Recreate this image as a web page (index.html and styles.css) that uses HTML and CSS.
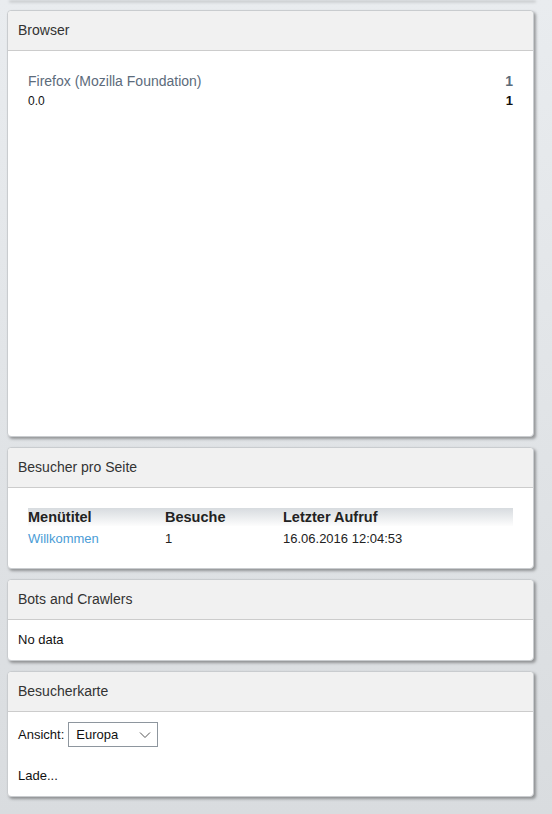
FILE: index.html
```html
<!DOCTYPE html>
<html lang="de">
<head>
    <meta charset="UTF-8">
    <meta name="viewport" content="width=device-width, initial-scale=1.0">
    <link rel="stylesheet" href="styles.css">
    <title>Statistik</title>
</head>
<body>

    <div class="page">
        <!-- angeschnittene Box von oben -->
        <div class="box box-cut"></div>

        <!-- Browser -->
        <div class="box">
            <div class="box-head">Browser</div>
            <div class="box-body box-browser">
                <ul class="browser-list">
                    <li class="browser-main">
                        <span>Firefox (Mozilla Foundation)</span>
                        <b>1</b>
                    </li>
                    <li class="browser-version">
                        <span>0.0</span>
                        <b>1</b>
                    </li>
                </ul>
            </div>
        </div>

        <!-- Besucher pro Seite -->
        <div class="box">
            <div class="box-head">Besucher pro Seite</div>
            <div class="box-body">
                <table class="visits">
                    <thead>
                        <tr>
                            <th class="col-title">Menütitel</th>
                            <th class="col-count">Besuche</th>
                            <th>Letzter Aufruf</th>
                        </tr>
                    </thead>
                    <tbody>
                        <tr>
                            <td><a href="#">Willkommen</a></td>
                            <td>1</td>
                            <td>16.06.2016 12:04:53</td>
                        </tr>
                    </tbody>
                </table>
            </div>
        </div>

        <!-- Bots -->
        <div class="box">
            <div class="box-head">Bots and Crawlers</div>
            <div class="box-body">
                <p class="plain">No data</p>
            </div>
        </div>

        <!-- Karte -->
        <div class="box">
            <div class="box-head">Besucherkarte</div>
            <div class="box-body">
                <div class="view-row">
                    <span>Ansicht:</span>
                    <div class="fake-select">
                        <span>Europa</span>
                        <svg width="12" height="8" viewBox="0 0 12 8">
                            <path d="M1 1.5 L6 6.5 L11 1.5" fill="none" stroke="#555" stroke-width="1"/>
                        </svg>
                    </div>
                </div>
                <p class="plain loading">Lade...</p>
            </div>
        </div>
    </div>

</body>
</html>
```

FILE: styles.css
```css
html {
    background: linear-gradient(#e9ecef, #d9dcdf);
    min-height: 100%;
}

body {
    font-family: "Liberation Sans", Arial, sans-serif;
    margin: 0;
    padding: 0;
    color: #222;
}

.page {
    padding: 0 18px 18px 7px;
    display: flex;
    flex-direction: column;
    gap: 10px;
}

/* Boxen */
.box {
    background-color: #fff;
    border: 1px solid #c9cccf;
    border-radius: 4px;
    box-shadow: 2px 2px 3px rgba(0, 0, 0, 0.35);
}

.box-cut {
    height: 0;
    border-top: none;
    border-radius: 0 0 4px 4px;
    margin-top: -1px;
}

.box-head {
    height: 39px;
    line-height: 39px;
    padding: 0 10px;
    font-size: 14px;
    color: #333;
    background-color: #f1f1f1;
    border-bottom: 1px solid #ccc;
    border-radius: 4px 4px 0 0;
}

.box-body {
    padding: 10px 10px;
}

/* Browser Liste */
.box-browser {
    height: 365px;
}

.browser-list {
    list-style: none;
    margin: 10px 10px 0;
    padding: 0;
}

.browser-list li {
    display: flex;
    justify-content: space-between;
}

.browser-main {
    font-size: 14px;
    color: #5c6b7b;
    height: 20px;
    line-height: 20px;
}

.browser-version {
    font-size: 12px;
    color: #111;
    line-height: 20px;
}

.browser-version b {
    font-size: 13px;
}

/* Tabelle */
.visits {
    width: calc(100% - 20px);
    margin: 10px 10px;
    border-collapse: collapse;
    font-size: 13px;
}

.visits th {
    text-align: left;
    font-size: 14.5px;
    font-weight: bold;
    color: #222;
    height: 18px;
    padding: 0;
    background: linear-gradient(#d7dbdf, #fdfdfd);
}

.visits td {
    padding: 3px 0 1px;
    height: 18px;
    color: #222;
}

.col-title {
    width: 137px;
}

.col-count {
    width: 118px;
}

.visits a {
    color: #4a9cd6;
    text-decoration: none;
}

.plain {
    margin: 0;
    font-size: 13px;
    line-height: 20px;
    color: #111;
}

/* Ansicht */
.view-row {
    display: flex;
    align-items: center;
    gap: 4px;
    font-size: 13px;
    color: #111;
}

.fake-select {
    border: 1px solid #8e969e;
    display: flex;
    align-items: center;
    justify-content: space-between;
    padding: 0 6px 0 7px;
    box-sizing: border-box;
    width: 90px;
    height: 25px;
    font-size: 13px;
}

.loading {
    margin-top: 19px;
}
```
